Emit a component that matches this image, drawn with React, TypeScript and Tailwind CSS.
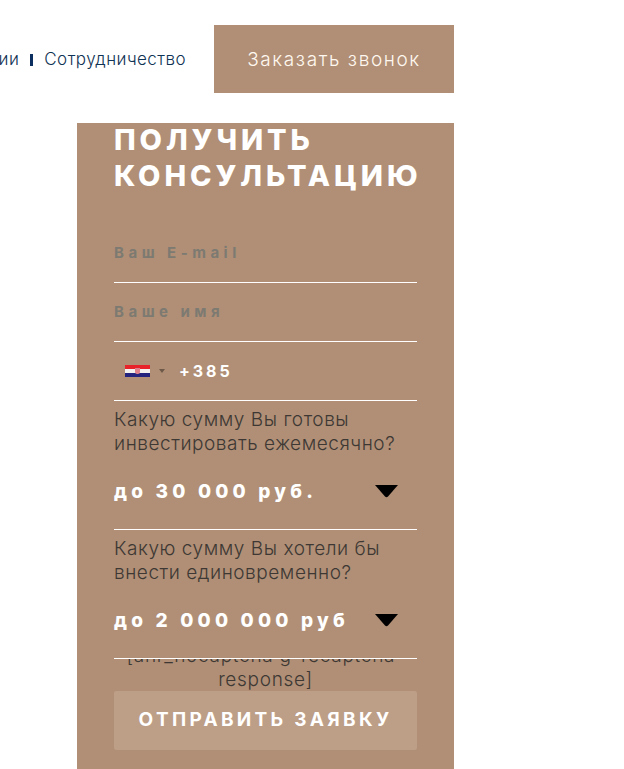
const font = { fontFamily: '"Open Sans", sans-serif' }

function TextField({ label }: { label: string }) {
  return (
    <div className="h-[59px] border-b border-white flex items-center">
      <span className="text-[15px] font-bold tracking-[4.5px] text-[#7d7a72] font-['Inter',sans-serif]">{label}</span>
    </div>
  )
}

function Arrow() {
  return (
    <svg width="23" height="13" viewBox="0 0 23 13" className="shrink-0 mb-[2px]">
      <path d="M0 0 H23 L13 11.5 Q11.5 13 10 11.5 Z" fill="#000" />
    </svg>
  )
}

function SelectField({ question, value }: { question: string; value: string }) {
  return (
    <div className="relative z-10 h-[129px] bg-[#b08f76] border-b border-white">
      <p className="pt-[7px] text-[19px] leading-[24px] font-light text-[#3d3834] font-['Inter',sans-serif] tracking-[0.55px]">{question}</p>
      <div className="flex items-center justify-between h-[24px] mt-[24px] pr-[19px]">
        <span className="text-[19px] font-extrabold tracking-[4.2px] text-white font-['Inter',sans-serif]">{value}</span>
        <Arrow />
      </div>
    </div>
  )
}

export default function App() {
  return (
    <div className="w-[624px] h-[769px] overflow-hidden bg-white" style={font}>
      {/* Header */}
      <div className="w-[454px] h-[93px] pt-[25px] flex justify-end items-stretch">
        <div className="flex items-center shrink-0 mr-[28px] pt-[2px] text-[17px] font-light text-[#0f3354] font-['Inter',sans-serif] tracking-[0.45px]">
          <span>ии</span>
          <span className="w-[3px] h-[12px] bg-[#0b2f5e] mx-[11px]" />
          <span>Сотрудничество</span>
        </div>
        <div className="w-[240px] shrink-0 h-[68px] pt-[2px] bg-[#b08f76] flex items-center justify-center text-[19px] font-light tracking-[1.6px] text-[#fff8f0] font-['Inter',sans-serif]">
          Заказать звонок
        </div>
      </div>

      {/* Form */}
      <div className="ml-[77px] mt-[30px] w-[377px] h-[646px] bg-[#b08f76] px-[37px] flex flex-col">
        <h2 className="mt-[-1px] text-[29px] leading-[36px] font-extrabold tracking-[3.9px] text-white font-['Inter',sans-serif] whitespace-nowrap">
          ПОЛУЧИТЬ<br />КОНСУЛЬТАЦИЮ
        </h2>
        <div className="mt-[30px]">
          <TextField label="Ваш E-mail" />
          <TextField label="Ваше имя" />
          <div className="h-[59px] border-b border-white flex items-center pl-[11px]">
            <div className="relative w-[25px] h-[13px] flex flex-col">
              <div className="flex-1 bg-[#e8232a]" />
              <div className="flex-1 bg-[#f4f1f1]" />
              <div className="flex-1 bg-[#24247e]" />
              <div className="absolute left-[10px] top-[3px] w-[5px] h-[6px] rounded-b-[2px] bg-[#e0808a]" />
            </div>
            <div className="ml-[9px] w-0 h-0 border-x-[3px] border-x-transparent border-t-[4px] border-t-[#6e5848]" />
            <span className="ml-[14px] text-[16px] font-bold tracking-[3px] text-white font-['Inter',sans-serif]">+385</span>
          </div>
          <SelectField question="Какую сумму Вы готовы инвестировать ежемесячно?" value="до 30 000 руб." />
          <SelectField question="Какую сумму Вы хотели бы внести единовременно?" value="до 2 000 000 руб" />
        </div>
        <p className="mt-[-15px] text-center text-[19px] leading-[24px] font-light text-[#3d3834] tracking-[0.7px] font-['Inter',sans-serif]">
          [anr_nocaptcha g-recaptcha-response]
        </p>
        <button className="mt-[-1px] w-full h-[59px] rounded-[2px] bg-[#bd9e87] text-white text-[19px] font-bold tracking-[3.3px] font-['Inter',sans-serif]">
          ОТПРАВИТЬ ЗАЯВКУ
        </button>
      </div>
    </div>
  )
}
